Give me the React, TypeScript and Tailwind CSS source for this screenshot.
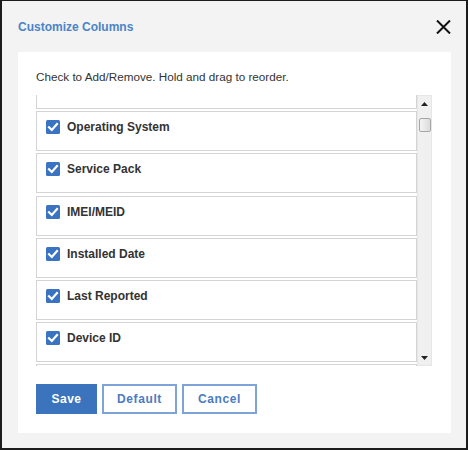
import { useState } from "react";

interface columnType {
  id: number;
  label: string;
  checked: boolean;
}

const initialColumns: columnType[] = [
  { id: 2, label: "Operating System", checked: true },
  { id: 3, label: "Service Pack", checked: true },
  { id: 4, label: "IMEI/MEID", checked: true },
  { id: 5, label: "Installed Date", checked: true },
  { id: 6, label: "Last Reported", checked: true },
  { id: 7, label: "Device ID", checked: true },
];

const CheckBox = ({ checked }: { checked: boolean }) => (
  <svg width="14" height="14" viewBox="0 0 14 14" className="shrink-0">
    {checked ? (
      <>
        <rect x="0" y="0" width="14" height="14" rx="1.5" fill="#3a73c1" />
        <path
          d="M3 7.2 L5.8 10 L11 4"
          fill="none"
          stroke="#fff"
          strokeWidth="2.2"
          strokeLinecap="square"
        />
      </>
    ) : (
      <rect x="0.5" y="0.5" width="13" height="13" rx="1.5" fill="#fff" stroke="#767676" />
    )}
  </svg>
);

const CustomizeColumns = () => {
  const [columns, setColumns] = useState<columnType[]>(initialColumns);

  const toggle = (id: number) => {
    setColumns(columns.map((c) => (c.id === id ? { ...c, checked: !c.checked } : c)));
  };

  return (
    <div className="w-[468px] h-[450px] bg-[#f3f3f3] border-x-2 border-b-2 border-t border-[#1c1c1c] flex flex-col font-['Liberation_Sans',Arial,sans-serif]">
      <div className="h-[51px] shrink-0 flex items-center justify-between pl-4 pr-[15px]">
        <h1 className="text-[12px] font-bold text-[#4a84c7]">Customize Columns</h1>
        <button className="w-[15px] h-[15px] flex items-center justify-center">
          <svg width="15" height="14" viewBox="0 0 15 14">
            <path d="M1 0.5 L14 13.5 M14 0.5 L1 13.5" stroke="#111" strokeWidth="2" />
          </svg>
        </button>
      </div>

      <div className="flex-1 ml-4 mr-[15px] mb-[15px] bg-white px-[18px] pt-[17px]">
        <p className="text-[11.7px] leading-4 text-[#333]">
          Check to Add/Remove. Hold and drag to reorder.
        </p>

        <div className="mt-[10px] h-[271px] flex">
          <div className="w-[381px] overflow-hidden">
            <div className="flex flex-col gap-[2.2px] mt-[-26px]">
              {/* rows scrolled partly out of view */}
              <div className="h-[40px] shrink-0 border border-[#d4d4d4]" />
              {columns.map((col) => (
                <div
                  key={col.id}
                  className="h-[40px] shrink-0 border border-[#d4d4d4] pt-[8px] pl-[9px] cursor-move"
                  onClick={() => toggle(col.id)}
                >
                  <div className="flex items-center gap-[7px] h-[14px]">
                    <CheckBox checked={col.checked} />
                    <span className="text-[12px] font-bold text-[#333]">{col.label}</span>
                  </div>
                </div>
              ))}
              <div className="h-[40px] shrink-0 border border-[#d4d4d4]" />
            </div>
          </div>

          {/* classic scrollbar */}
          <div className="w-[15px] h-full bg-[#f0f0f0] border border-[#e6e6e6] flex flex-col items-center">
            <div className="h-[15px] w-full flex items-center justify-center">
              <svg width="7" height="4" viewBox="0 0 7 4">
                <path d="M3.5 0 L7 4 L0 4 Z" fill="#222" />
              </svg>
            </div>
            <div className="mt-[7px] w-[12px] h-[14px] rounded-[2px] border border-[#a6a6a6] bg-gradient-to-r from-[#f4f4f4] to-[#dcdcdc]" />
            <div className="flex-1" />
            <div className="h-[15px] w-full flex items-center justify-center">
              <svg width="7" height="4" viewBox="0 0 7 4">
                <path d="M0 0 L7 0 L3.5 4 Z" fill="#222" />
              </svg>
            </div>
          </div>
        </div>

        <div className="mt-[18px] flex gap-[5px]">
          <button className="w-[61px] h-[30px] bg-[#3b74bd] text-white text-[12px] font-bold tracking-[0.5px]">
            Save
          </button>
          <button className="w-[75px] h-[30px] bg-white border-2 border-[#7ea3d6] text-[#4a7cbf] text-[12px] font-bold tracking-[0.6px]">
            Default
          </button>
          <button className="w-[75px] h-[30px] bg-white border-2 border-[#7ea3d6] text-[#4a7cbf] text-[12px] font-bold tracking-[0.6px]">
            Cancel
          </button>
        </div>
      </div>
    </div>
  );
};

export default function App() {
  return <CustomizeColumns />;
}
